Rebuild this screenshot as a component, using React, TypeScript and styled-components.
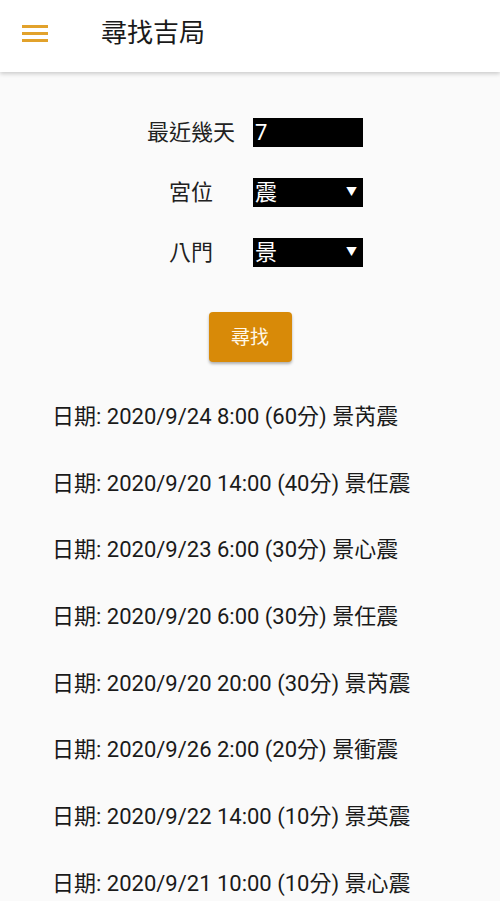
import styled, { createGlobalStyle } from 'styled-components';

const GlobalStyle = createGlobalStyle`
  * { box-sizing: border-box; }
  body {
    margin: 0;
    background-color: #fafafa;
    font-family: Roboto, "Noto Sans CJK TC", sans-serif;
    color: #212121;
  }
`;

const results = [
  '日期: 2020/9/24 8:00 (60分) 景芮震',
  '日期: 2020/9/20 14:00 (40分) 景任震',
  '日期: 2020/9/23 6:00 (30分) 景心震',
  '日期: 2020/9/20 6:00 (30分) 景任震',
  '日期: 2020/9/20 20:00 (30分) 景芮震',
  '日期: 2020/9/26 2:00 (20分) 景衝震',
  '日期: 2020/9/22 14:00 (10分) 景英震',
  '日期: 2020/9/21 10:00 (10分) 景心震',
];

const Page = styled.div`
  height: 901px;
  overflow: hidden;
`;

const Header = styled.header`
  height: 72px;
  background-color: #ffffff;
  box-shadow: 0 2px 4px rgba(0, 0, 0, 0.18);
  display: flex;
  align-items: center;
  padding-left: 22px;
  position: relative;
  z-index: 1;
`;

const MenuButton = styled.div`
  width: 26px;
  display: flex;
  flex-direction: column;
  gap: 4px;
  margin-right: 53px;
  margin-bottom: 6px;
  span {
    display: block;
    height: 3px;
    background-color: #e2a22b;
  }
`;

const Title = styled.h1`
  margin: 0;
  font-size: 26px;
  font-weight: 400;
  color: #1a1a1a;
  line-height: 1;
  padding-bottom: 6px;
`;

const Form = styled.div`
  display: grid;
  grid-template-columns: auto 110px;
  column-gap: 18px;
  row-gap: 31px;
  justify-content: center;
  align-items: center;
  padding: 46px 0 0 10px;
`;

const Label = styled.label`
  font-size: 22px;
  justify-self: center;
  line-height: 29px;
`;

const Field = styled.div`
  height: 29px;
  background-color: #000000;
  color: #ffffff;
  font-size: 22px;
  line-height: 29px;
  padding-left: 2px;
  display: flex;
  justify-content: space-between;
  align-items: center;
`;

const Arrow = styled.span`
  font-size: 11px;
  margin-right: 6px;
`;

const ButtonRow = styled.div`
  display: flex;
  justify-content: center;
  margin-top: 45px;
`;

const SearchBtn = styled.button`
  width: 83px;
  height: 50px;
  border: none;
  border-radius: 4px;
  background-color: #d88a08;
  color: #fff8e8;
  font-family: inherit;
  font-size: 19px;
  box-shadow: 0 2px 3px rgba(0, 0, 0, 0.3);
  padding-bottom: 4px;
`;

const Results = styled.div`
  display: flex;
  flex-direction: column;
  gap: 38.7px;
  margin-top: 41px;
  padding-left: 52px;
`;

const Item = styled.p`
  margin: 0;
  font-size: 22px;
  line-height: 28px;
  color: #1a1a1a;
`;

export default function App() {
  return (
    <Page>
      <GlobalStyle />
      <Header>
        <MenuButton>
          <span />
          <span />
          <span />
        </MenuButton>
        <Title>尋找吉局</Title>
      </Header>
      <Form>
        <Label>最近幾天</Label>
        <Field>7</Field>
        <Label>宮位</Label>
        <Field>
          震<Arrow>▼</Arrow>
        </Field>
        <Label>八門</Label>
        <Field>
          景<Arrow>▼</Arrow>
        </Field>
      </Form>
      <ButtonRow>
        <SearchBtn>尋找</SearchBtn>
      </ButtonRow>
      <Results>
        {results.map((r, i) => (
          <Item key={i}>{r}</Item>
        ))}
      </Results>
    </Page>
  );
}
